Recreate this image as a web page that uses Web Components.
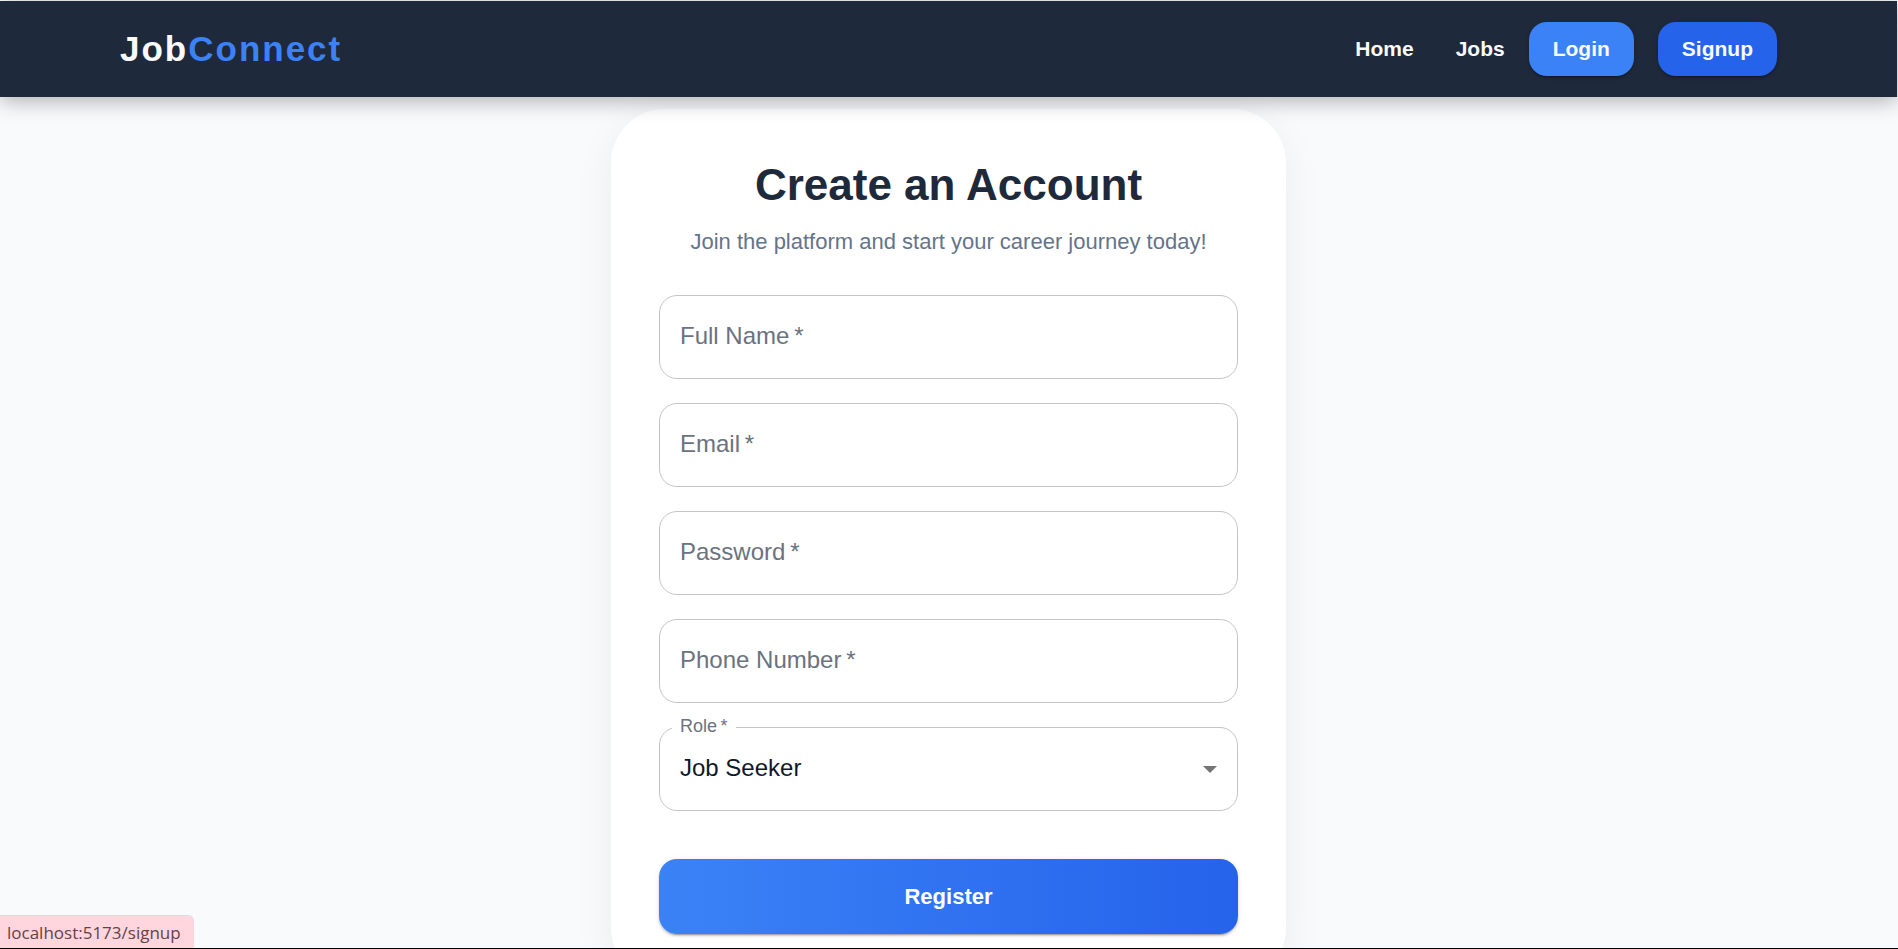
<!DOCTYPE html>
<html lang="en">
<head>
<meta charset="utf-8">
<meta name="viewport" content="width=device-width, initial-scale=1">
<title>JobConnect – Sign up</title>
<style>
  body {
    margin: 0;
    font-family: "Liberation Sans", Arial, Helvetica, sans-serif;
    color: #0f172a;
    background: #f8fafc;
  }
</style>
</head>
<body>
<job-page>
  <job-header slot="header">
    <nav-link href="#home">Home</nav-link>
    <nav-link href="#jobs">Jobs</nav-link>
    <nav-pill slot="actions" href="#login">Login</nav-pill>
    <nav-pill slot="actions" href="#signup" tone="strong">Signup</nav-pill>
  </job-header>
  <signup-card>
    <span slot="title">Create an Account</span>
    <span slot="subtitle">Join the platform and start your career journey today!</span>
    <text-field label="Full Name" type="text" name="name"></text-field>
    <text-field label="Email" type="email" name="email"></text-field>
    <text-field label="Password" type="password" name="password"></text-field>
    <text-field label="Phone Number" type="tel" name="phone"></text-field>
    <select-field label="Role" name="role" options="Job Seeker,Recruiter"></select-field>
    <submit-button slot="action">Register</submit-button>
  </signup-card>
  <link-status slot="status">localhost:5173/signup</link-status>
</job-page>

<script>
  const define = (name, html, setup) => {
    const template = document.createElement('template');
    template.innerHTML = html;
    customElements.define(name, class extends HTMLElement {
      constructor() {
        super();
        this.attachShadow({ mode: 'open' }).append(template.content.cloneNode(true));
      }
      connectedCallback() {
        if (setup) setup(this, this.shadowRoot);
      }
    });
  };

  define('job-page', `
    <style>
      :host {
        display: flex; flex-direction: column; box-sizing: border-box;
        height: 100vh; overflow: hidden; position: relative;
        padding: 1px 1px 0 0; border-bottom: 1px solid #000; background: #f8fafc;
      }
      main { display: flex; justify-content: center; padding: 12px 16px; }
    </style>
    <slot name="header"></slot>
    <main><slot></slot></main>
    <slot name="status"></slot>`);

  define('job-header', `
    <style>
      :host { display: block; position: relative; z-index: 1; flex: none;
        background: #1e293b; box-shadow: 0 4px 20px rgba(0, 0, 0, .3); }
      header { display: flex; justify-content: space-between; align-items: center;
        padding: 21px 120px; }
      .logo { font-size: 35px; line-height: 40px; font-weight: 700; letter-spacing: 2px;
        color: #f8fafc; text-decoration: none; }
      .logo span { color: #3b82f6; }
      nav { display: flex; align-items: center; gap: 24px; }
      .links { display: flex; gap: 42px; }
    </style>
    <header>
      <a class="logo" href="#home">Job<span>Connect</span></a>
      <nav>
        <div class="links"><slot></slot></div>
        <slot name="actions"></slot>
      </nav>
    </header>`);

  const setHref = (host, root) => {
    root.querySelector('a').href = host.getAttribute('href');
  };

  define('nav-link', `
    <style>
      :host { display: block; }
      a { font-size: 21px; line-height: 30px; font-weight: 700; color: #f8fafc; text-decoration: none; }
    </style>
    <a><slot></slot></a>`, setHref);

  define('nav-pill', `
    <style>
      :host { display: block; --fill: #3b82f6; }
      :host([tone="strong"]) { --fill: #2563eb; }
      a { display: block; padding: 12px 24px; border-radius: 18px; background: var(--fill);
        font-size: 21px; line-height: 30px; font-weight: 700; color: #f8fafc; text-decoration: none;
        box-shadow: 0 3px 1px -2px rgba(0, 0, 0, .2), 0 2px 2px rgba(0, 0, 0, .14), 0 1px 5px rgba(0, 0, 0, .12); }
    </style>
    <a><slot></slot></a>`, setHref);

  define('signup-card', `
    <style>
      :host { display: block; box-sizing: border-box; width: 100%; max-width: 675px;
        padding: 48px; border-radius: 54px; background: #fff;
        box-shadow: 0 10px 40px rgba(0, 0, 0, .06); }
      h1 { margin: 0 0 14px; padding-top: 2px; font-size: 44px; line-height: 52px; font-weight: 700;
        text-align: center; color: #1e293b; }
      p { margin: 0 0 36px; font-size: 22px; line-height: 34px; text-align: center; color: #64748b; }
      form { display: flex; flex-direction: column; gap: 48px; }
      .fields { display: flex; flex-direction: column; gap: 24px; }
    </style>
    <h1><slot name="title"></slot></h1>
    <p><slot name="subtitle"></slot></p>
    <form>
      <div class="fields"><slot></slot></div>
      <slot name="action"></slot>
    </form>`);

  define('text-field', `
    <style>
      :host { display: grid; height: 84px; }
      label, input { grid-area: 1 / 1; font-size: 24px; line-height: 36px; }
      label { align-self: center; padding: 0 21px 3px; color: #6b7280; pointer-events: none; }
      input { box-sizing: border-box; width: 100%; min-width: 0; margin: 0; padding: 0 20px;
        font-family: inherit; color: inherit; background: none;
        border: 1px solid #c4c4c4; border-radius: 18px; outline: none; }
      input:focus { border-color: #2563eb; }
      input:focus + label, input:valid + label { visibility: hidden; }
    </style>
    <input id="control" required>
    <label for="control"></label>`, (host, root) => {
      const input = root.querySelector('input');
      input.type = host.getAttribute('type');
      input.name = host.getAttribute('name');
      root.querySelector('label').textContent = host.getAttribute('label') + '\u2009*';
    });

  define('select-field', `
    <style>
      :host { display: grid; height: 84px; position: relative; }
      select, svg { grid-area: 1 / 1; }
      select { box-sizing: border-box; width: 100%; margin: 0; padding: 0 60px 3px 20px;
        appearance: none; font-family: inherit; font-size: 24px; line-height: 36px; color: #0f172a;
        background: none; border: 1px solid #c4c4c4; border-radius: 18px; outline: none; }
      label { position: absolute; top: -11px; left: 13px; padding: 0 8px; background: #fff;
        font-size: 18px; line-height: 20px; color: #6b7280; }
      svg { align-self: center; justify-self: end; margin-right: 21px; fill: #757575; pointer-events: none; }
    </style>
    <select id="control" required></select>
    <svg width="14" height="7" viewBox="0 0 14 7" aria-hidden="true"><path d="M0 0h14L7 7z"/></svg>
    <label for="control"></label>`, (host, root) => {
      const select = root.querySelector('select');
      select.name = host.getAttribute('name');
      select.replaceChildren(...host.getAttribute('options').split(',').map(text => new Option(text)));
      root.querySelector('label').textContent = host.getAttribute('label') + '\u2009*';
    });

  define('submit-button', `
    <style>
      :host { display: block; }
      button { display: block; width: 100%; padding: 20px 24px; border: 0; border-radius: 18px;
        font-family: inherit; font-size: 22px; line-height: 35px; font-weight: 700; color: #fff;
        background: linear-gradient(90deg, #3b82f6, #2563eb); cursor: pointer;
        box-shadow: 0 3px 1px -2px rgba(0, 0, 0, .2), 0 2px 2px rgba(0, 0, 0, .14), 0 1px 5px rgba(0, 0, 0, .12); }
    </style>
    <button type="submit"><slot></slot></button>`);

  define('link-status', `
    <style>
      :host { position: absolute; left: 0; bottom: -1px; z-index: 2; box-sizing: border-box;
        padding: 5px 13px 4px 7px; border-top: 1px solid #dcdcdc; border-top-right-radius: 6px;
        background: #ffd6de; color: #5f4449;
        font-family: "Open Sans", "Noto Sans", sans-serif; font-size: 17px; line-height: 24px; }
    </style>
    <slot></slot>`);
</script>
</body>
</html>
